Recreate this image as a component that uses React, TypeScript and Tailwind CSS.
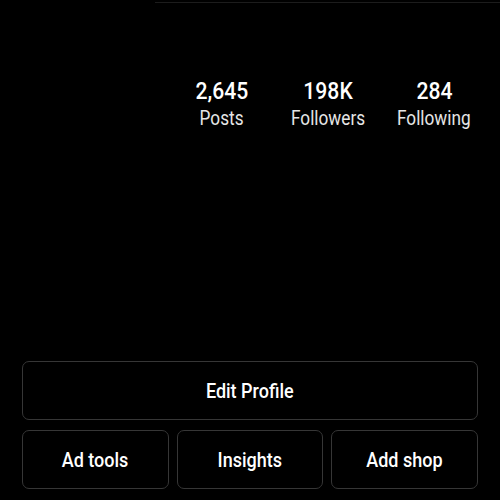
const stats = [
  { value: "2,645", label: "Posts" },
  { value: "198K", label: "Followers" },
  { value: "284", label: "Following" },
];

function Stat({ value, label }: { value: string; label: string }) {
  return (
    <div className="flex flex-col items-center w-[106px]">
      <span className="text-[24px] leading-[28px] font-medium text-white scale-x-[0.88]">{value}</span>
      <span className="text-[20px] leading-[26px] text-[#e6e6e6] scale-x-[0.86]">{label}</span>
    </div>
  );
}

function Button({ label, className = "" }: { label: string; className?: string }) {
  return (
    <button className={`flex items-center justify-center rounded-[7px] border-[1.5px] border-[#363636] bg-black text-white ${className}`}>
      <span className="text-[20px] font-medium scale-x-[0.9]">{label}</span>
    </button>
  );
}

export default function App() {
  return (
    <div
      className="w-[500px] h-[500px] bg-black flex flex-col overflow-hidden"
      style={{ fontFamily: "Roboto, 'Liberation Sans', sans-serif" }}
    >
      {/* faint edge at top */}
      <div className="h-[4px] flex items-center pl-[155px]">
        <div className="h-px w-full bg-[#1c1c1c]" />
      </div>

      <div className="flex pl-[169px] pt-[73px]">
        {stats.map((s) => (
          <Stat key={s.label} value={s.value} label={s.label} />
        ))}
      </div>

      <div className="mt-auto px-[22px] pb-[11px] flex flex-col gap-[10px]">
        <Button label="Edit Profile" className="h-[59px] w-full" />
        <div className="grid grid-cols-3 gap-[8px]">
          <Button label="Ad tools" className="h-[59px]" />
          <Button label="Insights" className="h-[59px]" />
          <Button label="Add shop" className="h-[59px]" />
        </div>
      </div>
    </div>
  );
}
